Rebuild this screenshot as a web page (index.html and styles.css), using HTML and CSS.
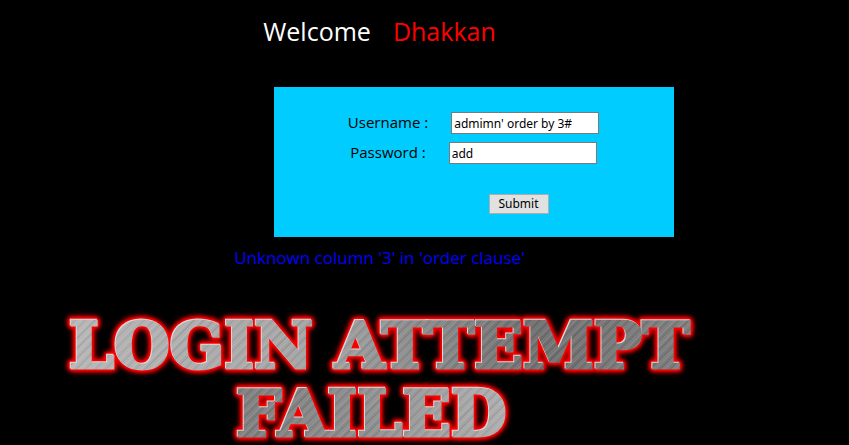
FILE: index.html
```
<!DOCTYPE html>
<html lang="en">
<head>
<meta charset="utf-8">
<title>Login</title>
<link rel="stylesheet" href="styles.css">
</head>
<body>
<main class="page">
  <h1 class="welcome">Welcome <span class="name">Dhakkan</span></h1>
  <form class="panel">
    <div class="row">
      <label for="uname">Username :</label>
      <input class="field" id="uname" type="text" value="admimn' order by 3#">
    </div>
    <div class="row">
      <label for="passwd">Password :</label>
      <input class="field" id="passwd" type="text" value="add">
    </div>
    <button class="submit" type="submit">Submit</button>
  </form>
  <p class="error">Unknown column '3' in 'order clause'</p>
  <div class="banner">
    <div class="metal">LOGIN ATTEMPT</div>
    <div class="metal metal-second">FAILED</div>
  </div>
</main>
</body>
</html>
```
FILE: styles.css
```
body {
  margin: 0;
  background: #000;
  color: #000;
  font-family: "Open Sans", "Noto Sans", sans-serif;
  font-size: 15px;
}

.page {
  display: flex;
  flex-direction: column;
  align-items: center;
  padding: 13px 90px 0 0;
}

.welcome {
  display: flex;
  gap: 22px;
  margin: 0;
  color: #fff;
  font-size: 25px;
  font-weight: 400;
  line-height: 36px;
}

.name {
  color: #f00;
}

.panel {
  display: flex;
  flex-direction: column;
  align-items: center;
  box-sizing: border-box;
  width: 400px;
  max-width: 100%;
  margin: 38px 0 0 188px;
  padding: 25px 0 23px;
  background: #0cf;
}

.row {
  display: flex;
  gap: 23px;
  margin-bottom: 8px;
  line-height: 20px;
}

.field {
  box-sizing: border-box;
  width: 148px;
  height: 22px;
  padding: 1px 2px;
  border: 1px solid #7a7a7a;
  background: #fff;
  color: #000;
  font: 12px "Noto Sans", sans-serif;
}

.submit {
  width: 60px;
  height: 20px;
  margin: 22px 0 0 90px;
  padding: 0;
  border: 1px solid #adadad;
  background: #e1e1e1;
  color: #000;
  font: 12px "Noto Sans", sans-serif;
  line-height: 18px;
}

.error {
  margin: 9px 0 0;
  color: #00f;
  font-size: 17px;
  line-height: 24px;
}

.banner {
  display: grid;
  gap: 8px;
  margin-top: 46px;
  font-family: "DejaVu Serif", serif;
  font-size: 64px;
  font-weight: 700;
  line-height: 60px;
  text-align: center;
  white-space: nowrap;
  filter: drop-shadow(-1px -1px 0 #ddd) drop-shadow(0 0 1px #f00)
    drop-shadow(0 0 1px #f00) drop-shadow(0 0 2px #f00) drop-shadow(0 0 2px #f00);
}

.metal {
  padding: 0 4px;
  color: transparent;
  background:
    repeating-linear-gradient(135deg, #fff2 0 1px, #0000 1px 3px, #0001 3px 4px, #fff1 4px 7px),
    linear-gradient(90deg, #b4b4b4, #a0a0a0 40%, #6c6c6c 75%, #7c7c7c);
  background-clip: text;
  -webkit-background-clip: text;
  -webkit-text-stroke: 3px transparent;
}

.metal-second {
  padding-right: 20px;
  background:
    repeating-linear-gradient(135deg, #fff2 0 1px, #0000 1px 3px, #0001 3px 4px, #fff1 4px 7px),
    linear-gradient(90deg, #7c7c7c 30%, #888 45%, #b4b4b4 75%);
  background-clip: text;
  -webkit-background-clip: text;
}
```
